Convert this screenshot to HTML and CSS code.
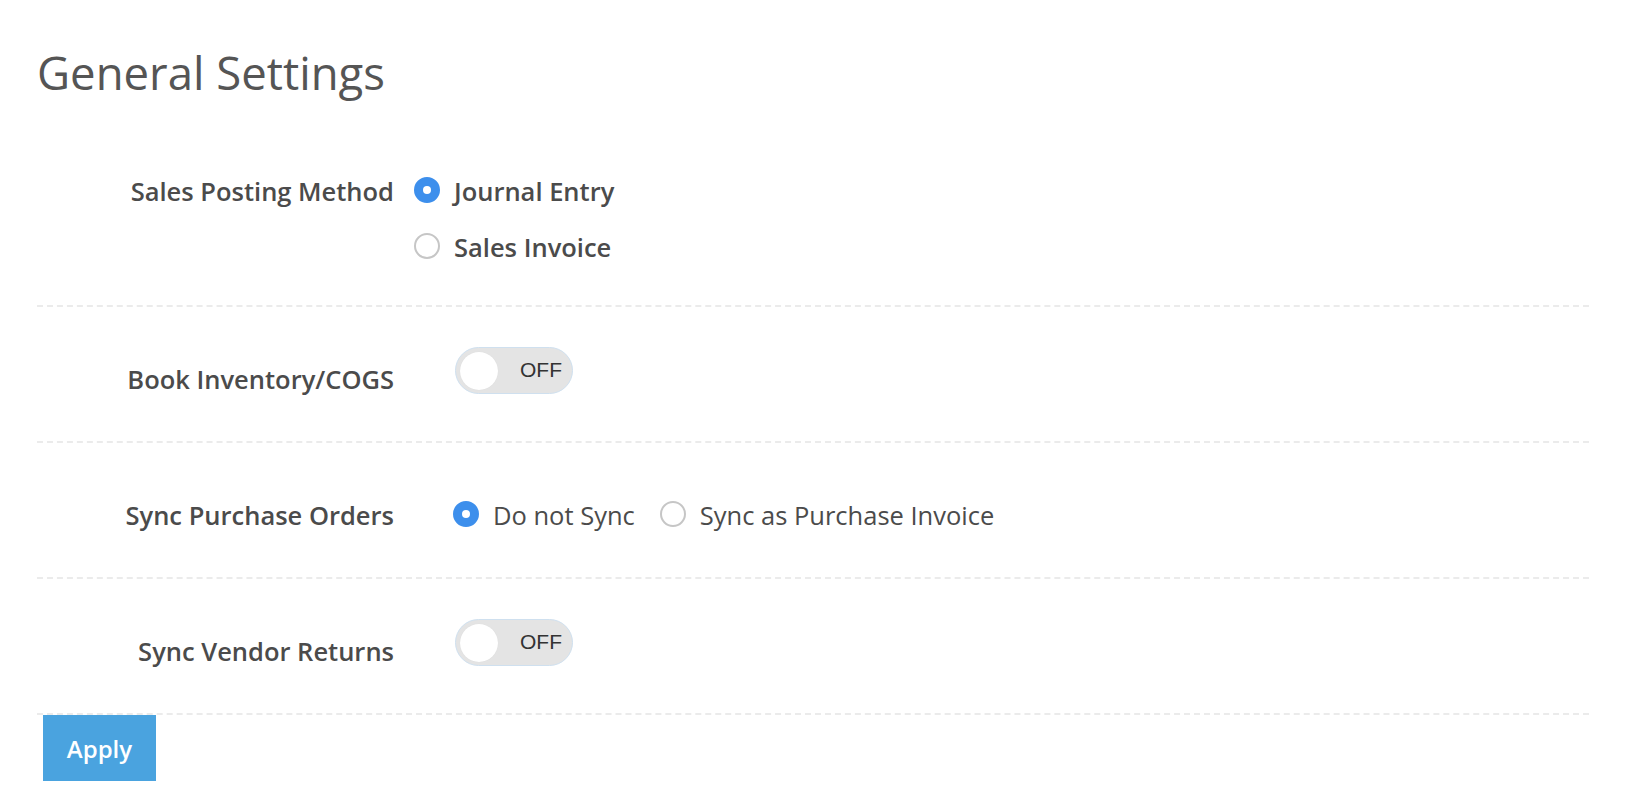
FILE: index.html
```html
<!DOCTYPE html>
<html lang="en">
<head>
<meta charset="utf-8">
<title>General Settings</title>
<link rel="stylesheet" href="styles.css">
</head>
<body>
<main class="page">
  <h1 class="title">General Settings</h1>

  <section class="row row-first">
    <div class="label">Sales Posting Method</div>
    <div class="control control-near">
      <div class="options options-stacked">
        <label class="option option-strong"><span class="radio radio-on"></span><span>Journal Entry</span></label>
        <label class="option option-strong"><span class="radio"></span><span>Sales Invoice</span></label>
      </div>
    </div>
  </section>

  <section class="row">
    <div class="label">Book Inventory/COGS</div>
    <div class="control control-top">
      <div class="toggle"><span class="knob"></span><span class="toggle-text">OFF</span></div>
    </div>
  </section>

  <section class="row">
    <div class="label">Sync Purchase Orders</div>
    <div class="control control-inline">
      <div class="options options-inline">
        <label class="option"><span class="radio radio-on"></span><span>Do not Sync</span></label>
        <label class="option"><span class="radio"></span><span>Sync as Purchase Invoice</span></label>
      </div>
    </div>
  </section>

  <section class="row">
    <div class="label">Sync Vendor Returns</div>
    <div class="control control-top">
      <div class="toggle"><span class="knob"></span><span class="toggle-text">OFF</span></div>
    </div>
  </section>

  <button class="apply" type="button">Apply</button>
</main>
</body>
</html>
```

FILE: styles.css
```css
* {
  box-sizing: border-box;
}

html, body {
  margin: 0;
  padding: 0;
  background: #ffffff;
}

body {
  font-family: "Open Sans", "DejaVu Sans", sans-serif;
  color: #4b4b4b;
}

.page {
  width: 1589px;
  padding-left: 37px;
  height: 808px;
  overflow: hidden;
}

.title {
  margin: 45px 0 0 0;
  height: 74px;
  font-size: 45.5px;
  line-height: 55px;
  font-weight: 400;
  color: #555555;
}

.row {
  display: flex;
  align-items: flex-start;
  height: 136px;
  padding-top: 40px;
  border-bottom: 2px dashed #ebebeb;
}

.row-first {
  height: 188px;
}

.label {
  width: 357px;
  flex: none;
  text-align: right;
  margin-top: 17px;
  font-size: 25.5px;
  line-height: 30px;
  font-weight: 600;
  color: #4b4b4b;
}

.control {
  padding-left: 61px;
  margin-top: 17px;
}

.control-near {
  padding-left: 20px;
}

.control-inline {
  padding-left: 59px;
}

.control-top {
  margin-top: 0;
}

.options {
  display: flex;
}

.options-stacked {
  flex-direction: column;
  gap: 26px;
}

.options-inline {
  flex-direction: row;
  gap: 25px;
}

.option {
  display: flex;
  align-items: center;
  gap: 14px;
  font-size: 25.5px;
  line-height: 30px;
  font-weight: 400;
  color: #4b4b4b;
}

.option-strong {
  font-weight: 600;
}

.radio {
  flex: none;
  width: 26px;
  height: 26px;
  border-radius: 50%;
  border: 2px solid #c6c6c6;
  background: #ffffff;
  display: flex;
  align-items: center;
  justify-content: center;
  margin-top: -2px;
}

.radio-on {
  border-color: #3d8fec;
  background: #3d8fec;
}

.radio-on::after {
  content: "";
  width: 8px;
  height: 8px;
  border-radius: 50%;
  background: #ffffff;
}

.toggle {
  width: 118px;
  height: 47px;
  border-radius: 24px;
  background: #e4e4e4;
  border: 1px solid #cfe0ef;
  display: flex;
  align-items: center;
  justify-content: space-between;
  padding: 0 10px 0 4px;
}

.knob {
  width: 38px;
  height: 38px;
  border-radius: 50%;
  background: #ffffff;
  box-shadow: 0 0 1px rgba(0, 0, 0, 0.08);
}

.toggle-text {
  font-family: "Liberation Sans", Arial, sans-serif;
  font-size: 21px;
  line-height: 24px;
  color: #333333;
  margin-top: -2px;
}

.apply {
  display: block;
  margin: 0 0 0 6px;
  width: 113px;
  height: 66px;
  border: none;
  border-radius: 0;
  background: #4aa3df;
  color: #ffffff;
  font-family: "Open Sans", "DejaVu Sans", sans-serif;
  font-size: 24px;
  font-weight: 600;
  padding: 0;
  text-align: center;
}
```
